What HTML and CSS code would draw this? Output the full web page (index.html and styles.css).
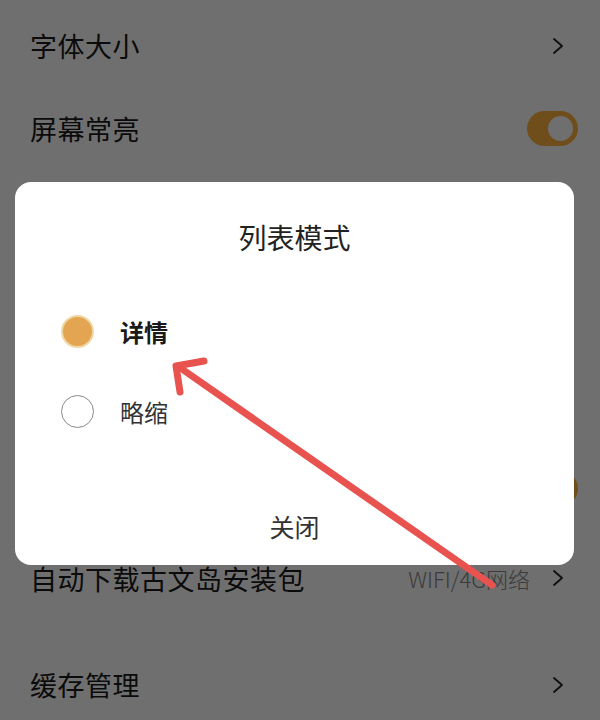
FILE: index.html
```html
<!DOCTYPE html>
<html lang="zh-CN">
<head>
  <meta charset="UTF-8" />
  <meta name="viewport" content="width=device-width, initial-scale=1.0" />
  <title>设置</title>
  <link rel="stylesheet" href="styles.css">
</head>
<body>
  <div class="settings">
    <div class="row">
      <span class="label">字体大小</span>
      <svg class="chevron" viewBox="0 0 12 18"><path d="M2 2 L10 9 L2 16" /></svg>
    </div>
    <div class="row">
      <span class="label">屏幕常亮</span>
      <span class="switch on"></span>
    </div>
    <div class="row">
      <span class="label">列表模式</span>
      <svg class="chevron" viewBox="0 0 12 18"><path d="M2 2 L10 9 L2 16" /></svg>
    </div>
    <div class="row">
      <span class="label">阅读背景</span>
      <svg class="chevron" viewBox="0 0 12 18"><path d="M2 2 L10 9 L2 16" /></svg>
    </div>
    <div class="row">
      <span class="label">消息推送</span>
      <svg class="chevron" viewBox="0 0 12 18"><path d="M2 2 L10 9 L2 16" /></svg>
    </div>
    <div class="row row-tall">
      <span class="label">自动播放</span>
      <span class="switch on"></span>
    </div>
    <div class="row row-short">
      <span class="label">自动下载古文岛安装包</span>
      <span class="value">WIFI/4G网络</span>
      <svg class="chevron" viewBox="0 0 12 18"><path d="M2 2 L10 9 L2 16" /></svg>
    </div>
    <div class="row row-gap">
      <span class="label">缓存管理</span>
      <svg class="chevron" viewBox="0 0 12 18"><path d="M2 2 L10 9 L2 16" /></svg>
    </div>
  </div>

  <div class="mask">
    <div class="dialog">
      <div class="dialog-title">列表模式</div>
      <div class="options">
        <div class="option selected">
          <span class="radio"></span>
          <span class="option-text">详情</span>
        </div>
        <div class="option">
          <span class="radio"></span>
          <span class="option-text">略缩</span>
        </div>
      </div>
      <div class="dialog-close">关闭</div>
    </div>
  </div>

  <svg class="annotation" viewBox="0 0 600 720">
    <path d="M492 585 L179 367" />
    <path d="M204 361 L176 366 L180 392" />
  </svg>
</body>
</html>
```

FILE: styles.css
```css
* {
  box-sizing: border-box;
  margin: 0;
  padding: 0;
}

body {
  width: 600px;
  height: 720px;
  overflow: hidden;
  background: #ffffff;
  font-family: "Noto Sans CJK SC", "Noto Sans", sans-serif;
  color: #222;
}

.settings {
  padding-top: 4px;
}

.row {
  height: 83px;
  display: flex;
  align-items: center;
  padding: 0 22px 0 30px;
}

.row-tall {
  height: 116px;
  padding-top: 22px;
}

.row-short {
  height: 84px;
  padding-top: 2px;
}

.row-gap {
  margin-top: 24px;
}

.label {
  flex: 1;
  font-size: 27px;
  letter-spacing: 0.5px;
  color: #1a1a1a;
}

.value {
  font-size: 22px;
  font-weight: 300;
  color: #888;
  margin-right: 22px;
}

.chevron {
  width: 12px;
  height: 18px;
  margin-right: 14px;
  fill: none;
  stroke: #222;
  stroke-width: 1.8;
  stroke-linecap: round;
  stroke-linejoin: round;
}

.switch {
  position: relative;
  width: 51px;
  height: 35px;
  border-radius: 18px;
  background: #ddd;
}

.switch::after {
  content: "";
  position: absolute;
  top: 5px;
  left: 5px;
  width: 25px;
  height: 25px;
  border-radius: 50%;
  background: #fff;
}

.switch.on {
  background: #ffb440;
}

.switch.on::after {
  left: 21px;
}

.mask {
  position: fixed;
  top: 0;
  left: 0;
  right: 0;
  bottom: 0;
  background: rgba(0, 0, 0, 0.565);
  padding: 182px 26px 0 15px;
}

.dialog {
  background: #fff;
  border-radius: 16px;
  height: 383px;
  padding-top: 38px;
  display: flex;
  flex-direction: column;
}

.dialog-title {
  text-align: center;
  font-size: 28px;
  line-height: 34px;
  color: #222;
}

.options {
  margin-top: 37px;
}

.option {
  height: 80px;
  display: flex;
  align-items: center;
  padding-left: 46px;
}

.radio {
  width: 33px;
  height: 33px;
  border-radius: 50%;
  border: 1.5px solid #8a8a8a;
  background: #fff;
  margin-right: 26px;
}

.option.selected .radio {
  background: #e3a552;
  border: 2px solid #efd7a6;
}

.option-text {
  font-size: 24px;
  color: #333;
}

.option.selected .option-text {
  font-weight: 700;
  color: #1a1a1a;
}

.dialog-close {
  margin-top: auto;
  height: 78px;
  line-height: 78px;
  text-align: center;
  font-size: 25px;
  color: #333;
}

.annotation {
  position: fixed;
  top: 0;
  left: 0;
  width: 600px;
  height: 720px;
  fill: none;
  stroke: #e9534f;
  stroke-width: 7;
  stroke-linecap: round;
  stroke-linejoin: round;
}
```
